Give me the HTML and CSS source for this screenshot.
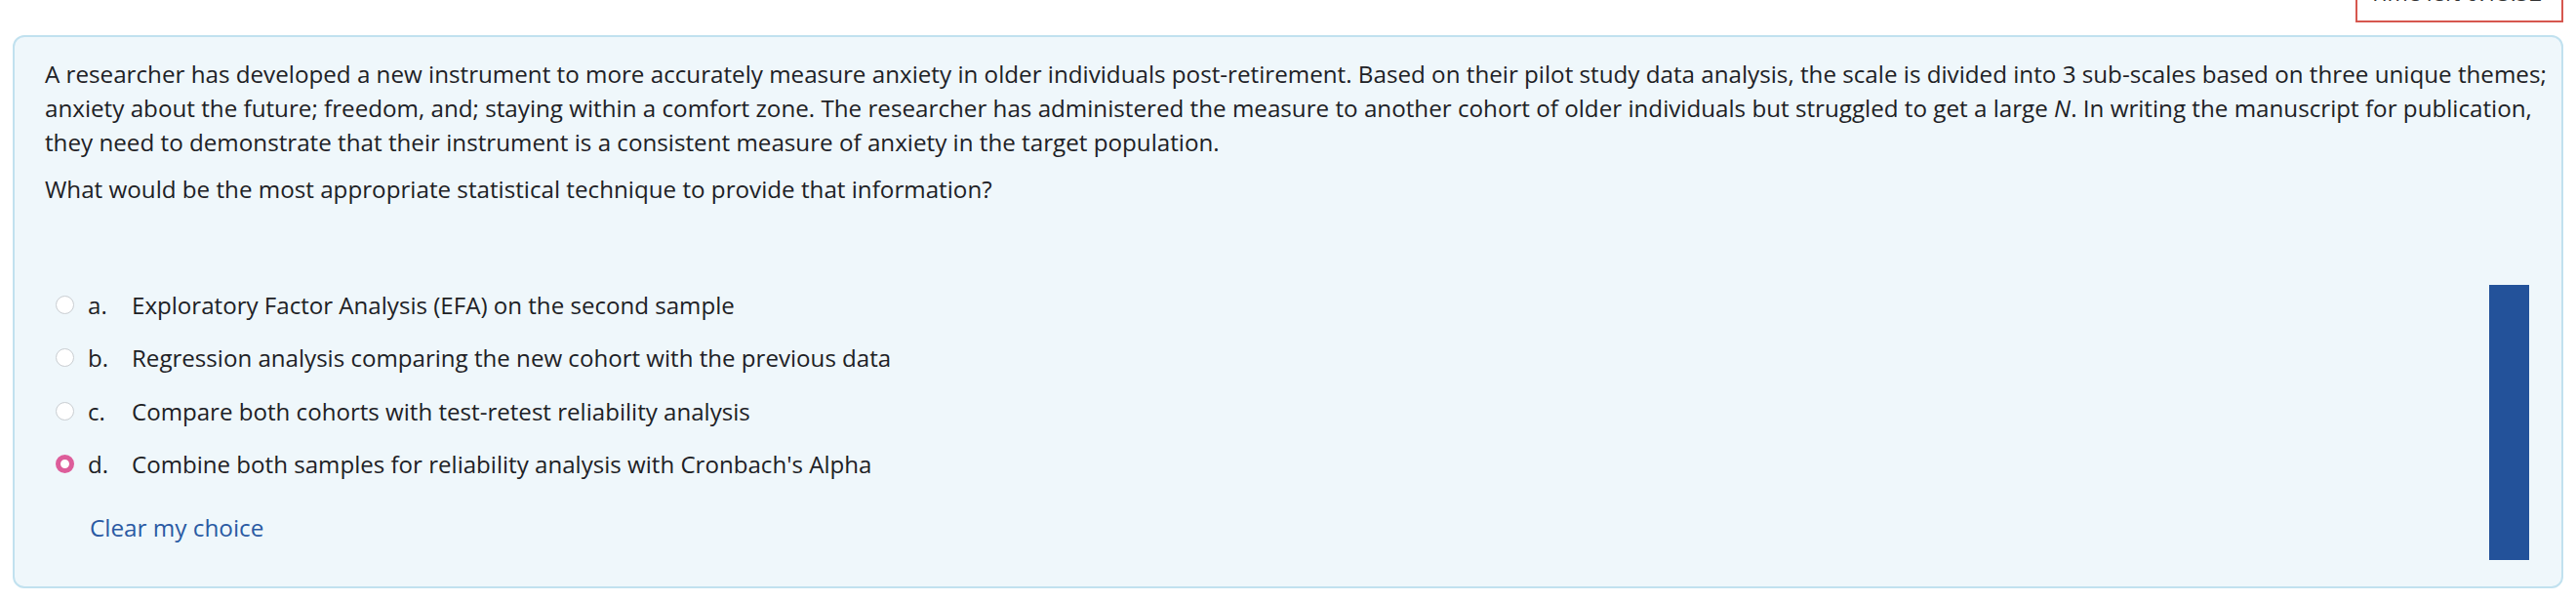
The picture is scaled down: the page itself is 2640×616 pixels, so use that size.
FILE: index.html
```html
<!DOCTYPE html>
<html lang="en">
<head>
<meta charset="utf-8">
<title>Question</title>
<link rel="stylesheet" href="styles.css">
</head>
<body>
<div class="topbar">
  <div class="timer">Time left 0:13:32</div>
</div>
<div class="qbox">
  <div class="qtext">
    <p>A researcher has developed a new instrument to more accurately measure anxiety in older individuals post-retirement. Based on their pilot study data analysis, the scale is divided into 3 sub-scales based on three unique themes; anxiety about the future; freedom, and; staying within a comfort zone. The researcher has administered the measure to another cohort of older individuals but struggled to get a large <i>N</i>. In writing the manuscript for publication, they need to demonstrate that their instrument is a consistent measure of anxiety in the target population.</p>
    <p>What would be the most appropriate statistical technique to provide that information?</p>
  </div>
  <div class="answer-row">
    <div class="answers">
      <div class="opt"><span class="radio"></span><span class="letter">a.</span><span class="label">Exploratory Factor Analysis (EFA) on the second sample</span></div>
      <div class="opt"><span class="radio"></span><span class="letter">b.</span><span class="label">Regression analysis comparing the new cohort with the previous data</span></div>
      <div class="opt"><span class="radio"></span><span class="letter">c.</span><span class="label">Compare both cohorts with test-retest reliability analysis</span></div>
      <div class="opt"><span class="radio checked"></span><span class="letter">d.</span><span class="label">Combine both samples for reliability analysis with Cronbach's Alpha</span></div>
      <a class="clear" href="#">Clear my choice</a>
    </div>
    <div class="bar"></div>
  </div>
</div>
</body>
</html>
```
FILE: styles.css
```css
html, body {
  margin: 0;
  padding: 0;
  background: #ffffff;
}
body {
  font-family: "Open Sans", Lato, sans-serif;
  color: #1d2125;
  font-size: 22px;
}
.topbar {
  display: flex;
  justify-content: flex-end;
  padding-right: 13px;
  height: 23px;
  overflow: hidden;
}
.timer {
  box-sizing: border-box;
  width: 213px;
  height: 60px;
  margin-top: -37px;
  border: 2px solid #d6574f;
  padding: 12px 10px 0 12px;
  font-size: 23px;
  line-height: 30px;
  color: #333;
  white-space: nowrap;
}
.qbox {
  box-sizing: border-box;
  margin: 13px 13px 0 13px;
  height: 567px;
  background: #eff7fb;
  border: 2px solid #c1e1ef;
  border-radius: 12px;
  padding: 0 0 0 31px;
}
.qtext {
  font-size: 24.2px;
}
.qtext p {
  margin: 0;
  line-height: 35px;
}
.qtext p:first-child {
  margin-top: 20px;
}
.qtext p + p {
  margin-top: 13px;
}
.answer-row {
  display: flex;
  justify-content: space-between;
  margin-top: 68px;
}
.answers {
  display: flex;
  flex-direction: column;
  padding-top: 6px;
  font-size: 24.1px;
}
.opt {
  display: flex;
  align-items: center;
  height: 54.5px;
}
.radio {
  box-sizing: border-box;
  width: 19px;
  height: 19px;
  border-radius: 50%;
  border: 1px solid #c9cdd1;
  background: #fff;
  margin-left: 11px;
  margin-right: 14px;
  flex: none;
}
.radio.checked {
  border: 5px solid #dd5d9a;
  background: #fff;
}
.letter {
  width: 45px;
}
.clear {
  display: block;
  margin-left: 46px;
  margin-top: 21px;
  font-size: 24.3px;
  color: #2a5aa3;
  text-decoration: none;
}
.bar {
  width: 41px;
  height: 282px;
  background: #23529a;
  margin-top: 13px;
  margin-right: 33px;
}
```
